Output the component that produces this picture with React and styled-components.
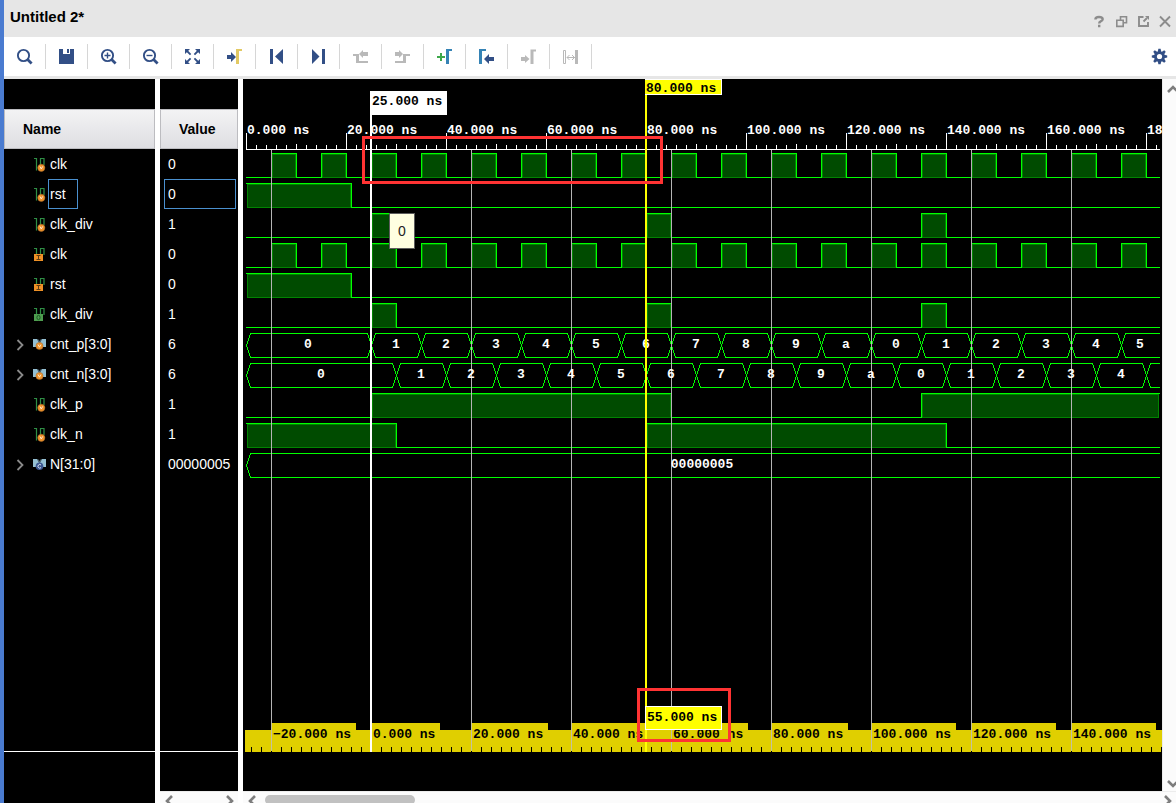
import React, { useLayoutEffect, useRef, useState } from "react";
import styled, { createGlobalStyle } from "styled-components";

const NAVY = "#324f86";
const GREY = "#b9b9b9";
const TEAL = "#3583b5";

const GlobalStyle = createGlobalStyle`
  * { box-sizing: border-box; }
  html, body { margin: 0; height: 100%; background: #fff; }
  body { font-family: "Liberation Sans", Arial, sans-serif; overflow: hidden; }
`;

const Window = styled.div`
  display: flex;
  flex-direction: column;
  height: 100vh;
  border-left: 4px solid #4a7bd0;
  background: #fff;
  overflow: hidden;
`;

const TitleBar = styled.header`
  flex: none;
  display: flex;
  justify-content: space-between;
  height: 37px;
  padding: 8px 4px 0 6px;
  background: #e6e6e6;
`;

const Title = styled.h1`
  margin: 0;
  font-size: 15px;
  line-height: 18px;
  font-weight: bold;
  color: #000;
`;

const WindowControls = styled.div`
  display: flex;
  gap: 8px;
  padding-top: 6px;
`;

const IconButton = styled.button`
  display: flex;
  align-items: center;
  justify-content: center;
  padding: 0;
  border: 0;
  background: none;
  width: 14px;
  height: 15px;
`;

const Toolbar = styled.div`
  flex: none;
  display: flex;
  align-items: center;
  height: 42px;
  padding-right: 8px;
  border-bottom: 3px solid #e6e6e6;
  background: #fff;
`;

const ToolButton = styled.button`
  display: flex;
  align-items: center;
  justify-content: center;
  width: 42px;
  height: 25px;
  padding: 0;
  border: 0;
  border-right: 1px solid #d6d6d6;
  background: none;
`;

const SettingsButton = styled(IconButton)`
  width: 17px;
  height: 17px;
  margin-left: auto;
`;

const Workspace = styled.main`
  flex: 1;
  display: flex;
  gap: 5px;
  min-height: 0;
`;

const Pane = styled.section`
  flex: none;
  display: flex;
  flex-direction: column;
  width: ${(p) => p.$width}px;
  min-height: 0;
`;

const PaneBody = styled.div`
  flex: 1;
  display: flex;
  flex-direction: column;
  min-height: 0;
  padding-top: 30px;
  background: #000;
  overflow: hidden;
`;

const PaneFooter = styled.div`
  flex: none;
  height: ${(p) => p.$height}px;
  margin-top: auto;
  border-top: 1px solid #fff;
`;

const SignalTable = styled.table`
  width: 100%;
  border-collapse: separate;
  border-spacing: 0;
  table-layout: fixed;
  color: #fff;
  font-size: 14px;
`;

const HeadCell = styled.th`
  height: 40px;
  padding: 0 18px;
  border: 1px solid #bcbcc0;
  background: linear-gradient(#f3f3f4, #dedee2);
  color: #000;
  font-size: 14px;
  line-height: 16px;
  text-align: left;
`;

const Cell = styled.td`
  height: 30px;
  padding: 0 2px 0 4px;
`;

const NameCell = styled(Cell)`
  padding: 0 0 0 12px;
`;

const NameLine = styled.div`
  display: flex;
  align-items: center;
  height: 30px;
`;

const Expander = styled.button`
  display: flex;
  width: 9px;
  height: 13px;
  padding: 0;
  border: 0;
  background: none;
`;

const ExpanderSlot = styled.span`
  width: 9px;
`;

const SignalIcon = styled.svg`
  width: 15px;
  height: 15px;
  margin: 0 0 0 8px;
`;

const Label = styled.span`
  height: 30px;
  line-height: 28px;
  padding-left: ${(p) => (p.$wide ? 3 : 1)}px;
  padding-right: ${(p) => (p.$wide ? 0 : 11)}px;
  border: 1px solid ${(p) => (p.$selected ? "#4a90cf" : "transparent")};
  white-space: nowrap;
`;

const ValueBox = styled(Label)`
  display: block;
`;

const ScrollTrack = styled.div`
  flex: none;
  display: flex;
  align-items: flex-start;
  height: 12px;
  padding: 3px 3px 0 4px;
  border-top: 1px solid #ececec;
  background: #fbfbfb;
  overflow: hidden;
`;

const ScrollThumb = styled.div`
  width: 150px;
  height: 10px;
  margin: 0 auto 0 6px;
  border-radius: 5px;
  background: #c1c1c1;
`;

const Spacer = styled.span`
  flex: 1;
`;

const WavePane = styled.section`
  flex: 1;
  display: flex;
  flex-direction: column;
  min-width: 0;
  min-height: 0;
`;

const WaveRow = styled.div`
  flex: 1;
  display: flex;
  min-height: 0;
`;

const WaveCanvas = styled.div`
  flex: 1;
  min-width: 0;
  min-height: 0;
  background: #000;
  overflow: hidden;

  svg {
    display: block;
    width: 100%;
    height: 100%;
  }
`;

const VerticalTrack = styled.div`
  flex: none;
  display: flex;
  flex-direction: column;
  justify-content: space-between;
  width: 14px;
  padding: 5px 0 2px 3px;
  border-left: 1px solid #ececec;
  background: #fbfbfb;
  overflow: hidden;
`;

const MonoText = styled.text`
  font: bold 13px "Liberation Mono", "Courier New", monospace;
`;

const TipText = styled.text`
  font: 14px "Liberation Sans", Arial, sans-serif;
`;

/* ---------- icons ---------- */

const ArrowRight = ({ x, y, color }) => (
  <path fill={color} d={`M${x} ${y - 2}h4v-3l5 5l-5 5v-3h-4z`} />
);
const ArrowLeft = ({ x, y, color }) => (
  <path fill={color} d={`M${x} ${y}l5 -5v3h5v4h-5v3z`} />
);
const Lens = ({ children }) => (
  <g stroke={NAVY} fill="none">
    <circle cx="7.5" cy="7.5" r="5.6" strokeWidth="1.9" />
    <path d="M11.6 11.6l4 4" strokeWidth="2.8" />
    {children}
  </g>
);

const toolIcons = {
  Search: <Lens />,
  "Save waveform": (
    <path fill={NAVY} fillRule="evenodd" d="M1 1h15v15H1zM5 1v5h7V1zM9 1h2v4H9z" />
  ),
  "Zoom in": (
    <Lens>
      <path d="M4.5 7.5h6M7.5 4.5v6" strokeWidth="1.4" />
    </Lens>
  ),
  "Zoom out": (
    <Lens>
      <path d="M4.5 7.5h6" strokeWidth="1.4" />
    </Lens>
  ),
  "Zoom fit": (
    <g>
      <path fill={NAVY} d="M1 1h5l-5 5zM16 1v5l-5-5zM1 16v-5l5 5zM16 16h-5l5-5z" />
      <path stroke={NAVY} strokeWidth="1.8" d="M3 3l3.6 3.6M14 3l-3.6 3.6M3 14l3.6-3.6M14 14l-3.6-3.6" />
    </g>
  ),
  "Go to cursor": (
    <g>
      <ArrowRight x={1} y={9} color={NAVY} />
      <path fill="#e2c964" d="M10 1h6v2h-3v13h-3z" />
    </g>
  ),
  "Go to time 0": <path fill={NAVY} d="M2 1h3v15H2zM15 1v15L7 8.5z" />,
  "Go to last time": <path fill={NAVY} d="M12 1h3v15h-3zM2 1l7.5 7.5L2 16z" />,
  "Previous transition": (
    <g fill={GREY}>
      <path d="M1 6h6v7h9v2H4V8H1z" />
      <path d="M7 6l4-4v2h5v4h-5v2z" />
    </g>
  ),
  "Next transition": (
    <g fill={GREY}>
      <path d="M1 13h8V6h7v2h-4v7H1z" />
      <path d="M1 4h4V2l4 4l-4 4V8H1z" />
    </g>
  ),
  "Add marker": (
    <g>
      <path fill="#3ea84a" d="M4 5h2v3h3v2H6v3H4v-3H1V8h3z" />
      <path fill={TEAL} d="M10 1h6v2h-3v13h-3z" />
    </g>
  ),
  "Previous marker": (
    <g>
      <path fill={TEAL} d="M1 1h7v2H4v13H1z" />
      <ArrowLeft x={6} y={11} color={NAVY} />
    </g>
  ),
  "Next marker": (
    <path fill={GREY} d="M10.500 1.500h5.500v2h-2.500V16h-3zM1 9h4V7l4.500 4l-4.500 4v-2H1z" />
  ),
  "Swap cursors": (
    <g>
      <path fill="none" stroke={GREY} d="M1.500 2.500h2v13h-2zM5 9.500h8M7.500 7L5 9.500l2.500 2.500M10 7l2.500 2.500L10 12" />
      <path fill={GREY} d="M13 2h3v14h-3z" />
    </g>
  ),
};

const Gear = () => (
  <svg width="17" height="17" viewBox="-8.500 -8.500 17 17" aria-hidden="true">
    <g fill={NAVY}>
      {[0, 45, 90, 135].map((a) => (
        <path key={a} transform={`rotate(${a})`} d="M-1.100 -7.700h2.200l.7 3v9.400l-.7 3h-2.200l-.7-3v-9.400z" />
      ))}
      <circle r="5.300" />
    </g>
    <circle r="2.600" fill="#fff" />
  </svg>
);

const controlIcons = {
  Help: (
    <path fill="none" stroke="#8c8c8c" strokeWidth="2.400" d="M3.400 5.400Q3.400 3 7 3Q10.700 3 10.700 5.300Q10.700 6.600 8.700 7.400Q7.200 8 7.200 9.600M7.200 10.800v2.400" />
  ),
  Restore: (
    <path fill="none" stroke="#8c8c8c" strokeWidth="1.600" d="M6.500 6V2.800h6v6H10M2.800 6.200h6.400v6.200H2.800z" />
  ),
  Maximize: (
    <g>
      <path fill="none" stroke="#8c8c8c" strokeWidth="1.900" d="M7.500 3H3v9h9V8M7.500 7.500l3.500-3.500" />
      <path fill="#8c8c8c" d="M9 2h4v4z" />
    </g>
  ),
  Close: (
    <path fill="none" stroke="#8c8c8c" strokeWidth="1.900" d="M2 2.500l10 10M12 2.500l-10 10" />
  ),
};

const Chevron = ({ dir }) => {
  const paths = {
    left: "M8 1L3 6l5 5",
    right: "M4 1l5 5l-5 5",
    up: "M2 8l5-5l5 5",
    down: "M2 3l5 5l5-5",
  };
  return (
    <svg width="12" height="11" viewBox="0 0 12 11" overflow="visible" aria-hidden="true">
      <path d={paths[dir]} fill="none" stroke="#7d7d7d" strokeWidth="2.600" />
    </svg>
  );
};

const Bit = () => (
  <path fill="none" stroke="#2f8f45" strokeWidth="1.200" d="M1 1.500h2.500V13.500M8.500 13.500H7.500V1.500h3.500V8" />
);
const VBadge = ({ cx, cy }) => (
  <g>
    <circle cx={cx} cy={cy} r="3.600" fill="#f0932b" stroke="#a86a2a" strokeWidth=".5" />
    <path d={`M${cx - 1.4} ${cy - 1.4}l1.400 2.600l1.400-2.600`} fill="none" stroke="#ffe9cc" />
  </g>
);
const Bus = () => (
  <g>
    <path fill="#94bfd2" d="M0 2h4l2 3v5H0zM13 2H9L7 5v5h6z" />
    <path fill="#4d6672" d="M4 2h1l1.500 2L8 2h1L7 6H6z" />
  </g>
);

const signalIcons = {
  regBit: (
    <g>
      <Bit />
      <VBadge cx={8.3} cy={10.8} />
    </g>
  ),
  inBit: (
    <g>
      <Bit />
      <rect x="1" y="7" width="9" height="7" fill="#ef9126" />
      <path d="M3.500 8.500h4M5.500 8.500v4M3.500 12.500h4" stroke="#5d3d14" />
    </g>
  ),
  outBit: (
    <g>
      <Bit />
      <rect x="1" y="7" width="9" height="7" fill="#4f9e50" />
      <ellipse cx="5.500" cy="10.500" rx="1.600" ry="2.200" fill="none" stroke="#1d5a25" />
    </g>
  ),
  regBus: (
    <g>
      <Bus />
      <VBadge cx={6.5} cy={9} />
    </g>
  ),
  constBus: (
    <g>
      <Bus />
      <circle cx="6.500" cy="9.300" r="3.800" fill="#3b5690" />
      <path d="M8 8A1.800 1.800 0 1 0 8 10.600" fill="none" stroke="#dce6f5" />
    </g>
  ),
};

/* ---------- simulation data (times in ns) ---------- */

const every = (start, step, n) => Array.from({ length: n }, (_, i) => start + i * step);
const clockEdges = every(5, 5, 200);
const divEdges = [25, 30, 80, 85, 135, 140, 190, 195, 245, 250];
const digits = "0123456789a";
const counter = (start) => ({
  edges: every(start, 10, 100),
  label: (i) => digits[i % 11],
});

const signals = [
  { name: "clk", value: "0", icon: "regBit", edges: clockEdges },
  { name: "rst", value: "0", icon: "regBit", edges: [0, 21], selected: true },
  { name: "clk_div", value: "1", icon: "regBit", edges: divEdges },
  { name: "clk", value: "0", icon: "inBit", edges: clockEdges },
  { name: "rst", value: "0", icon: "inBit", edges: [0, 21] },
  { name: "clk_div", value: "1", icon: "outBit", edges: divEdges },
  { name: "cnt_p[3:0]", value: "6", icon: "regBus", bus: counter(25) },
  { name: "cnt_n[3:0]", value: "6", icon: "regBus", bus: counter(30) },
  { name: "clk_p", value: "1", icon: "regBit", edges: [25, 85, 135, 195, 245, 305] },
  { name: "clk_n", value: "1", icon: "regBit", edges: [0, 30, 80, 140, 190, 250] },
  { name: "N[31:0]", value: "00000005", icon: "constBus", bus: { edges: [], label: () => "00000005" } },
];

/* ---------- waveform drawing ---------- */

const GREEN = "#00ff00";
const PX_PER_NS = 5;
const ORIGIN = 3;
const toX = (t) => ORIGIN + t * PX_PER_NS;
const AXIS_Y = 70;
const ROW = 30;

/* one-pixel horizontal line over the pixels a..b */
const HLine = ({ a, b, y, color = GREEN }) => (
  <rect x={a} y={y} width={b - a + 1} height="1" fill={color} />
);
const VLine = ({ x, from, to, color = GREEN }) => (
  <rect x={x} y={from} width="1" height={to - from + 1} fill={color} />
);

function BitWave({ edges, y, end }) {
  const hi = y + 4;
  const lo = y + 28;
  const xs = edges.map(toX).filter((x) => x < end);
  const bounds = [ORIGIN, ...xs, end];
  const parts = [];
  for (let i = 0; i < bounds.length - 1; i += 1) {
    const a = bounds[i];
    const b = bounds[i + 1];
    if (a === b) continue;
    if (i % 2 === 1) {
      parts.push(
        <g key={i}>
          <rect x={a + 1} y={hi + 1} width={b - a - 1} height={lo - hi} fill="#008400" />
          <rect x={a + 2} y={hi + 2} width={b - a - 3} height={lo - hi - 2} fill="#004b00" />
          <HLine a={a} b={b} y={hi} />
        </g>
      );
    } else {
      parts.push(<HLine key={i} a={a} b={b} y={lo} />);
    }
  }
  return (
    <g>
      {parts}
      {xs.filter((x) => x > ORIGIN).map((x) => (
        <VLine key={x} x={x} from={hi} to={lo} />
      ))}
    </g>
  );
}

function busBounds(bus, end) {
  return [ORIGIN, ...bus.edges.map(toX).filter((x) => x < end), end];
}

function BusWave({ bus, y, end }) {
  const hi = y + 4;
  const lo = y + 28;
  const mid = y + 16;
  const b = busBounds(bus, end);
  return b.slice(0, -1).map((a, i) => {
    const z = b[i + 1];
    const last = z === end;
    const right = last ? z : z - 4;
    return (
      <g key={a}>
        <path
          transform="translate(.5 .5)"
          d={`M${a + 4} ${hi}L${a} ${mid}L${a + 4} ${lo}${last ? "" : `M${z - 4} ${hi}L${z} ${mid}L${z - 4} ${lo}`}`}
          fill="none"
          stroke={GREEN}
        />
        <HLine a={a + 4} b={right} y={hi} />
        <HLine a={a + 4} b={right} y={lo} />
      </g>
    );
  });
}

function BusLabels({ bus, y, end }) {
  const b = busBounds(bus, end);
  return b.slice(0, -1).map((a, i) =>
    b[i + 1] - a < 20 ? null : (
      <MonoText key={a} x={Math.floor((a + b[i + 1]) / 2)} y={y + 19} textAnchor="middle" fill="#fff">
        {bus.label(i)}
      </MonoText>
    )
  );
}

function Waveform({ width, height }) {
  const end = width - 3;
  const bottom = height - 39;
  const ticks = every(0, 2, Math.ceil(width / 10)).filter((t) => toX(t) <= end);
  const labels = ticks.filter((t) => t % 20 === 0);
  const lowLabels = every(5, 20, Math.ceil(width / 100)).filter((t) => toX(t) < width);
  const lowTicks = every(1, 2, Math.ceil(width / 10)).filter((t) => toX(t) < width);
  return (
    <svg shapeRendering="crispEdges" role="img" aria-label="Waveform">
      {signals.map((s, i) => {
        const y = AXIS_Y + i * ROW;
        return s.bus ? (
          <BusWave key={i} bus={s.bus} y={y} end={end} />
        ) : (
          <BitWave key={i} edges={s.edges} y={y} end={end} />
        );
      })}
      {lowLabels.map((t) => (
        <VLine key={t} x={toX(t)} from={AXIS_Y} to={bottom - 1} color="#b4b4b4" />
      ))}
      <HLine a={ORIGIN} b={end} y={AXIS_Y} color="#fff" />
      {ticks.map((t) => (
        <VLine
          key={t}
          x={toX(t)}
          from={t % 20 === 0 ? 54 : t % 10 === 0 ? 65 : 66}
          to={AXIS_Y}
          color="#fff"
        />
      ))}
      {labels.map((t) => (
        <MonoText key={t} x={toX(t) + 1} y={55} fill="#fff">{`${t}.000 ns`}</MonoText>
      ))}
      {signals.map((s, i) =>
        s.bus ? <BusLabels key={i} bus={s.bus} y={AXIS_Y + i * ROW} end={end} /> : null
      )}

      {/* floating ruler, relative to the marker */}
      <rect x="2" y={bottom - 22} width={width} height="22" fill="#e0cf00" />
      {lowLabels.map((t) => {
        const text = `${t - 25}.000 ns`.replace("-", "−");
        return (
          <g key={t}>
            <rect x={toX(t) + 1} y={bottom - 29} width={text.length * 8 + 4} height="8" fill="#e0cf00" />
            <VLine x={toX(t)} from={bottom - 29} to={bottom - 2} color="#c4c0a0" />
            <MonoText x={toX(t) + 2} y={bottom - 14} fill="#000">{text}</MonoText>
          </g>
        );
      })}
      {lowTicks.map((t) => (
        <VLine
          key={t}
          x={toX(t)}
          from={(t - 5) % 20 === 0 ? bottom - 1 : bottom - 5}
          to={bottom - 1}
          color="#000"
        />
      ))}

      {/* marker */}
      <rect x={toX(25) - 1} y="12" width="2" height={bottom - 12} fill="#fff" />
      <rect x={toX(25) - 1} y="12" width="77" height="24" fill="#fff" />
      <MonoText x={toX(25) + 1} y="26" fill="#000">25.000 ns</MonoText>

      {/* cursor */}
      <rect x={toX(80) - 1} y="0" width="2" height={bottom} fill="#ff0" />
      <rect x={toX(80) - 1} y="0" width="77" height="16" fill="#fff" />
      <rect x={toX(80) - 1} y="1" width="76" height="14" fill="#ff0" />
      <MonoText x={toX(80)} y="13" fill="#000">80.000 ns</MonoText>
      <rect x={toX(80) - 1} y={bottom - 46} width="77" height="24" fill="#fff" />
      <rect x={toX(80)} y={bottom - 45} width="75" height="22" fill="#ff0" />
      <MonoText x={toX(80) + 1} y={bottom - 31} fill="#000">55.000 ns</MonoText>

      {/* value tip */}
      <rect x="146" y="134" width="26" height="36" fill="#5c5c5c" />
      <rect x="147" y="135" width="24" height="34" fill="#ffffe1" />
      <TipText x="159" y="157" textAnchor="middle" fill="#222">0</TipText>

      {/* annotation frames */}
      <g fill="none" stroke="#ff3333" strokeWidth="3">
        <rect x={toX(25) - 7.5} y="58.5" width="298" height="45" />
        <rect x={toX(80) - 7.5} y={bottom - 62.5} width="91" height="51" />
      </g>
    </svg>
  );
}

function WaveView() {
  const ref = useRef(null);
  const [size, setSize] = useState({ width: 919, height: 712 });
  useLayoutEffect(() => {
    const el = ref.current;
    const measure = () => setSize({ width: el.clientWidth, height: el.clientHeight });
    measure();
    const observer = new ResizeObserver(measure);
    observer.observe(el);
    return () => observer.disconnect();
  }, []);
  return (
    <WaveCanvas ref={ref}>
      <Waveform width={size.width} height={size.height} />
    </WaveCanvas>
  );
}

/* ---------- page ---------- */

export default function App() {
  return (
    <Window>
      <GlobalStyle />
      <TitleBar>
        <Title>Untitled 2*</Title>
        <WindowControls>
          {Object.entries(controlIcons).map(([label, icon]) => (
            <IconButton key={label} type="button" aria-label={label}>
              <svg width="14" height="15" viewBox="0 0 14 15" aria-hidden="true">{icon}</svg>
            </IconButton>
          ))}
        </WindowControls>
      </TitleBar>
      <Toolbar role="toolbar" aria-label="Waveform tools">
        {Object.entries(toolIcons).map(([label, icon]) => (
          <ToolButton key={label} type="button" aria-label={label}>
            <svg width="17" height="17" viewBox="0 0 17 17" aria-hidden="true">{icon}</svg>
          </ToolButton>
        ))}
        <SettingsButton type="button" aria-label="Settings">
          <Gear />
        </SettingsButton>
      </Toolbar>
      <Workspace>
        <Pane $width={151}>
          <PaneBody>
            <SignalTable>
              <thead>
                <tr><HeadCell scope="col">Name</HeadCell></tr>
              </thead>
              <tbody>
                {signals.map((s, i) => (
                  <tr key={i}>
                    <NameCell>
                      <NameLine>
                        {s.bus ? (
                          <Expander type="button" aria-label={`Expand ${s.name}`}>
                            <svg width="9" height="13" viewBox="0 0 9 13" aria-hidden="true">
                              <path d="M1.500 2l5 5l-5 5" fill="none" stroke="#8a8a8a" strokeWidth="1.800" />
                            </svg>
                          </Expander>
                        ) : (
                          <ExpanderSlot />
                        )}
                        <SignalIcon viewBox="0 0 15 15" aria-hidden="true">
                          {signalIcons[s.icon]}
                        </SignalIcon>
                        <Label $selected={s.selected}>{s.name}</Label>
                      </NameLine>
                    </NameCell>
                  </tr>
                ))}
              </tbody>
            </SignalTable>
            <PaneFooter $height={52} />
          </PaneBody>
        </Pane>
        <Pane $width={78}>
          <PaneBody>
            <SignalTable>
              <thead>
                <tr><HeadCell scope="col">Value</HeadCell></tr>
              </thead>
              <tbody>
                {signals.map((s, i) => (
                  <tr key={i}>
                    <Cell>
                      <ValueBox $wide $selected={s.selected}>{s.value}</ValueBox>
                    </Cell>
                  </tr>
                ))}
              </tbody>
            </SignalTable>
            <PaneFooter $height={40} />
          </PaneBody>
          <ScrollTrack>
            <Chevron dir="left" />
            <Spacer />
            <Chevron dir="right" />
          </ScrollTrack>
        </Pane>
        <WavePane>
          <WaveRow>
            <WaveView />
            <VerticalTrack>
              <Chevron dir="up" />
              <Chevron dir="down" />
            </VerticalTrack>
          </WaveRow>
          <ScrollTrack>
            <Chevron dir="left" />
            <ScrollThumb />
            <Chevron dir="right" />
          </ScrollTrack>
        </WavePane>
      </Workspace>
    </Window>
  );
}
